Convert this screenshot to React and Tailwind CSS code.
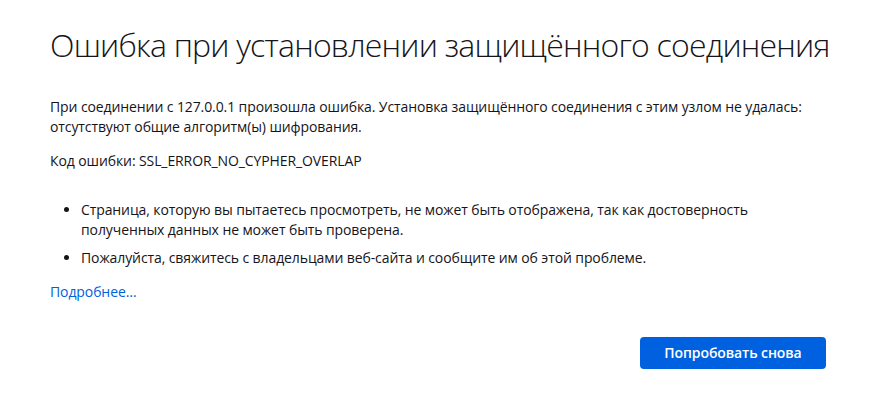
export default function App() {
  return (
    <div className="w-[888px] h-[405px] bg-white text-[#15141a] overflow-hidden" style={{ fontFamily: '"Open Sans", "Noto Sans", sans-serif' }}>
      <div className="ml-[50px] w-[776px] pt-[22px]">
        <h1 className="text-[32px] font-light leading-[46px] tracking-[-0.8px] whitespace-nowrap">Ошибка при установлении защищённого соединения</h1>
        <div className="mt-[29px] text-[14px] leading-[20px] tracking-[-0.1px]">
          <p>При соединении с 127.0.0.1 произошла ошибка. Установка защищённого соединения с этим узлом не удалась: отсутствуют общие алгоритм(ы) шифрования.</p>
          <p className="mt-[14px]">Код ошибки: SSL_ERROR_NO_CYPHER_OVERLAP</p>
          <ul className="mt-[29px] list-disc pl-[31px] flex flex-col gap-[8px]">
            <li>Страница, которую вы пытаетесь просмотреть, не может быть отображена, так как достоверность полученных данных не может быть проверена.</li>
            <li>Пожалуйста, свяжитесь с владельцами веб-сайта и сообщите им об этой проблеме.</li>
          </ul>
          <a className="block mt-[14px] text-[#0061e0]" href="#">Подробнее…</a>
          <div className="flex justify-end mt-[35px]">
            <button className="h-[32px] w-[186px] rounded-[4px] bg-[#0061e0] text-white text-[14px] font-semibold">Попробовать снова</button>
          </div>
        </div>
      </div>
    </div>
  );
}
